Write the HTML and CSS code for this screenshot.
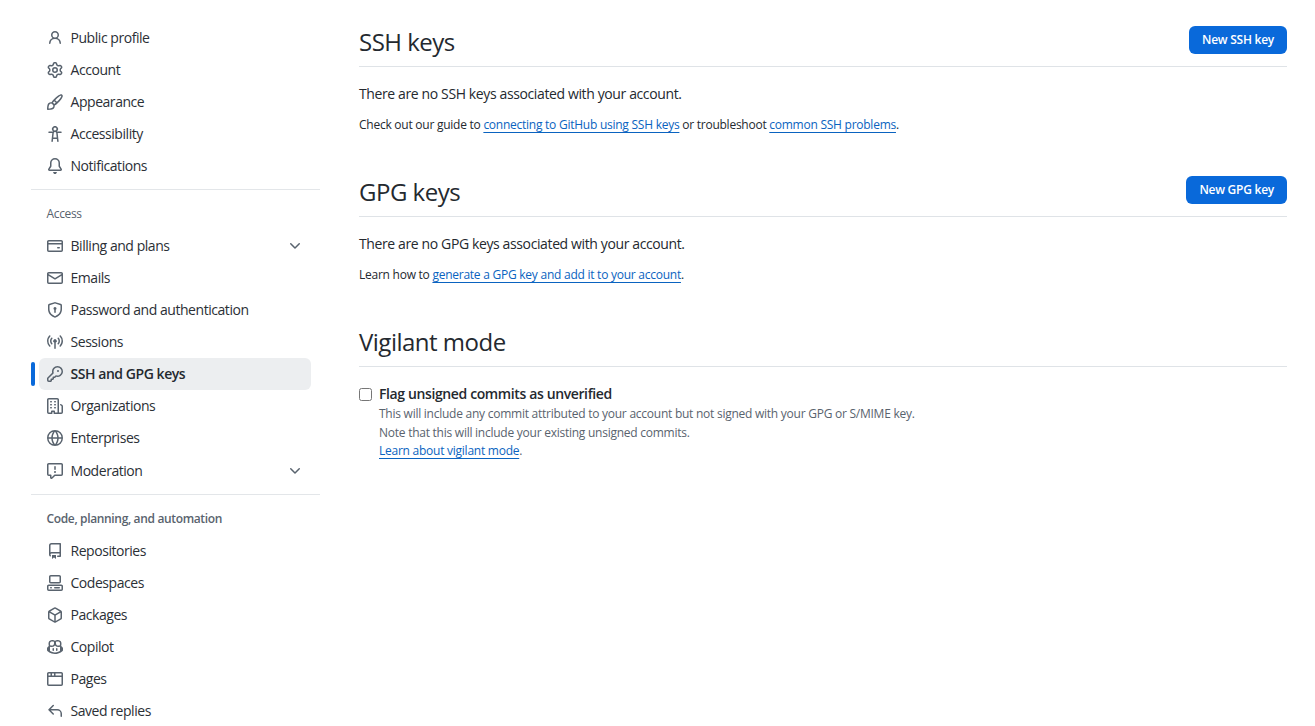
FILE: index.html
```html
<!DOCTYPE html>
<html lang="en">
<head>
    <meta charset="UTF-8">
    <meta name="viewport" content="width=device-width, initial-scale=1.0">
    <title>SSH and GPG keys</title>
    <link rel="stylesheet" href="styles.css">
</head>
<body>
<div class="layout">

    <!-- Settings navigation -->
    <nav class="sidebar">
        <a class="nav-item"><svg class="icon" viewBox="0 0 16 16"><path d="M10.561 8.073a6.005 6.005 0 0 1 3.432 5.142.75.75 0 1 1-1.498.07 4.5 4.5 0 0 0-8.99 0 .75.75 0 1 1-1.498-.07 6.004 6.004 0 0 1 3.431-5.142 3.999 3.999 0 1 1 5.123 0ZM10.5 5a2.5 2.5 0 1 0-5 0 2.5 2.5 0 0 0 5 0Z"/></svg>Public profile</a>
        <a class="nav-item"><svg class="icon" viewBox="0 0 16 16"><path d="M8 0a8.2 8.2 0 0 1 .701.031C9.444.095 9.99.645 10.16 1.29l.288 1.107c.018.066.079.158.212.224.231.114.454.243.668.386.123.082.233.09.299.071l1.103-.303c.644-.176 1.392.021 1.82.63.27.385.506.792.704 1.218.315.675.111 1.422-.364 1.891l-.814.806c-.049.048-.098.147-.088.294.016.257.016.515 0 .772-.01.147.038.246.088.294l.814.806c.475.469.679 1.216.364 1.891a7.977 7.977 0 0 1-.704 1.217c-.428.61-1.176.807-1.82.63l-1.102-.302c-.067-.019-.177-.011-.3.071a5.909 5.909 0 0 1-.668.386c-.133.066-.194.158-.211.224l-.29 1.106c-.168.646-.715 1.196-1.458 1.26a8.006 8.006 0 0 1-1.402 0c-.743-.064-1.289-.614-1.458-1.26l-.289-1.106c-.018-.066-.079-.158-.212-.224a5.738 5.738 0 0 1-.668-.386c-.123-.082-.233-.09-.299-.071l-1.103.303c-.644.176-1.392-.021-1.82-.63a8.12 8.12 0 0 1-.704-1.218c-.315-.675-.111-1.422.363-1.891l.815-.806c.05-.048.098-.147.088-.294a6.214 6.214 0 0 1 0-.772c.01-.147-.038-.246-.088-.294l-.815-.806C.635 6.045.431 5.298.746 4.623a7.92 7.92 0 0 1 .704-1.217c.428-.61 1.176-.807 1.82-.63l1.102.302c.067.019.177.011.3-.071.214-.143.437-.272.668-.386.133-.066.194-.158.211-.224l.29-1.106C6.009.645 6.556.095 7.299.03 7.53.01 7.764 0 8 0Zm-.571 1.525c-.036.003-.108.036-.137.146l-.289 1.105c-.147.561-.549.967-.998 1.189-.173.086-.34.183-.5.29-.417.278-.97.423-1.529.27l-1.103-.303c-.109-.03-.175.016-.195.045-.22.312-.412.644-.573.99-.014.031-.021.11.059.19l.815.806c.411.406.562.957.53 1.456a4.709 4.709 0 0 0 0 .582c.032.499-.119 1.05-.53 1.456l-.815.806c-.081.08-.073.159-.059.19.162.346.353.677.573.989.02.03.085.076.195.046l1.102-.303c.56-.153 1.113-.008 1.53.27.161.107.328.204.501.29.447.222.85.629.997 1.189l.289 1.105c.029.109.101.143.137.146a6.6 6.6 0 0 0 1.142 0c.036-.003.108-.036.137-.146l.289-1.105c.147-.561.549-.967.998-1.189.173-.086.34-.183.5-.29.417-.278.97-.423 1.529-.27l1.103.303c.109.029.175-.016.195-.045.22-.313.411-.644.573-.99.014-.031.021-.11-.059-.19l-.815-.806c-.411-.406-.562-.957-.53-1.456a4.709 4.709 0 0 0 0-.582c-.032-.499.119-1.05.53-1.456l.815-.806c.081-.08.073-.159.059-.19a6.464 6.464 0 0 0-.573-.989c-.02-.03-.085-.076-.195-.046l-1.102.303c-.56.153-1.113.008-1.53-.27a4.44 4.44 0 0 0-.501-.29c-.447-.222-.85-.629-.997-1.189l-.289-1.105c-.029-.11-.101-.143-.137-.146a6.6 6.6 0 0 0-1.142 0ZM11 8a3 3 0 1 1-6 0 3 3 0 0 1 6 0ZM9.5 8a1.5 1.5 0 1 0-3.001.001A1.5 1.5 0 0 0 9.5 8Z"/></svg>Account</a>
        <a class="nav-item"><svg class="icon" viewBox="0 0 16 16"><path d="M11.134 1.535c.7-.509 1.416-.942 2.076-1.155.649-.21 1.463-.267 2.069.34.603.601.568 1.411.368 2.07-.202.668-.624 1.39-1.125 2.096-1.011 1.424-2.496 2.987-3.775 4.249-1.098 1.084-2.132 1.839-3.04 2.3a3.744 3.744 0 0 1-1.055 3.217c-.431.431-1.065.691-1.657.861-.614.177-1.294.287-1.914.357A21.151 21.151 0 0 1 .797 16H.743l.007-.75H.749L.742 16a.75.75 0 0 1-.743-.742l.743-.008-.742.007v-.054a21.25 21.25 0 0 1 .13-2.284c.067-.647.187-1.287.358-1.914.17-.591.43-1.226.86-1.657a3.746 3.746 0 0 1 3.227-1.054c.466-.893 1.225-1.907 2.314-2.982 1.271-1.255 2.833-2.75 4.245-3.777ZM1.62 13.089c-.051.464-.086.929-.104 1.395.466-.018.932-.053 1.396-.104a10.511 10.511 0 0 0 1.668-.309c.526-.151.856-.325 1.011-.48a2.25 2.25 0 1 0-3.182-3.182c-.155.155-.329.485-.48 1.01a10.515 10.515 0 0 0-.309 1.67Zm10.396-10.34c-1.224.89-2.605 2.189-3.822 3.384l1.718 1.718c1.21-1.205 2.51-2.597 3.387-3.833.47-.662.78-1.227.912-1.662.134-.444.032-.551.009-.575h-.001V1.78c-.014-.014-.113-.113-.548.027-.432.14-.995.462-1.655.942Zm-4.832 7.266-.001.001a9.859 9.859 0 0 0 1.63-1.142L7.155 7.216a9.7 9.7 0 0 0-1.161 1.607c.482.302.889.71 1.19 1.192Z"/></svg>Appearance</a>
        <a class="nav-item"><svg class="icon" viewBox="0 0 16 16"><path d="M9.923 5.302c.063.063.122.129.178.198H14A.75.75 0 0 1 14 7h-3.3l.578 5.163.362 2.997a.75.75 0 0 1-1.49.18L9.868 13H6.132l-.282 2.34a.75.75 0 0 1-1.49-.18l.362-2.997L5.3 7H2a.75.75 0 0 1 0-1.5h3.9a2.54 2.54 0 0 1 .176-.198 3 3 0 1 1 3.847 0ZM9.2 7.073h-.001a1.206 1.206 0 0 0-2.398 0L6.305 11.5h3.39ZM9.5 3a1.5 1.5 0 1 0-3.001.001A1.5 1.5 0 0 0 9.5 3Z"/></svg>Accessibility</a>
        <a class="nav-item"><svg class="icon" viewBox="0 0 16 16"><path d="M8 16c.9 0 1.7-.6 1.9-1.5.1-.3-.1-.5-.4-.5h-3c-.3 0-.5.2-.4.5.2.9 1 1.5 1.9 1.5ZM3 5a5 5 0 0 1 10 0v2.947c0 .05.015.098.042.139l1.703 2.555A1.519 1.519 0 0 1 13.482 13H2.518a1.516 1.516 0 0 1-1.263-2.36l1.703-2.554A.255.255 0 0 0 3 7.947Zm5-3.5A3.5 3.5 0 0 0 4.5 5v2.947c0 .346-.102.683-.294.97l-1.703 2.556a.017.017 0 0 0-.003.01l.001.006c0 .002.002.004.004.006l.006.004.007.001h10.964l.007-.001.006-.004.004-.006.001-.007a.017.017 0 0 0-.003-.01l-1.703-2.554a1.745 1.745 0 0 1-.294-.97V5A3.5 3.5 0 0 0 8 1.5Z"/></svg>Notifications</a>

        <div class="nav-divider"></div>
        <div class="nav-heading">Access</div>

        <a class="nav-item"><svg class="icon" viewBox="0 0 16 16"><path d="M10.75 9a.75.75 0 0 0 0 1.5h1.5a.75.75 0 0 0 0-1.5h-1.5Z"/><path d="M0 3.75C0 2.784.784 2 1.75 2h12.5c.966 0 1.75.784 1.75 1.75v8.5A1.75 1.75 0 0 1 14.25 14H1.75A1.75 1.75 0 0 1 0 12.25ZM14.5 6.5h-13v5.75c0 .138.112.25.25.25h12.5a.25.25 0 0 0 .25-.25Zm0-2.75a.25.25 0 0 0-.25-.25H1.75a.25.25 0 0 0-.25.25V5h13Z"/></svg>Billing and plans<svg class="chevron" viewBox="0 0 16 16"><path d="M12.78 5.22a.749.749 0 0 1 0 1.06l-4.25 4.25a.749.749 0 0 1-1.06 0L3.22 6.28a.749.749 0 1 1 1.06-1.06L8 8.939l3.72-3.719a.749.749 0 0 1 1.06 0Z"/></svg></a>
        <a class="nav-item"><svg class="icon" viewBox="0 0 16 16"><path d="M1.75 2h12.5c.966 0 1.75.784 1.75 1.75v8.5A1.75 1.75 0 0 1 14.25 14H1.75A1.75 1.75 0 0 1 0 12.25v-8.5C0 2.784.784 2 1.75 2ZM1.5 12.251c0 .138.112.25.25.25h12.5a.25.25 0 0 0 .25-.25V5.809L8.38 9.397a.75.75 0 0 1-.76 0L1.5 5.809v6.442Zm13-8.181v-.32a.25.25 0 0 0-.25-.25H1.75a.25.25 0 0 0-.25.25v.32L8 7.88Z"/></svg>Emails</a>
        <a class="nav-item"><svg class="icon" viewBox="0 0 16 16"><path d="M8.533.133a1.75 1.75 0 0 0-1.066 0l-5.25 1.68A1.75 1.75 0 0 0 1 3.48V7c0 1.566.32 3.182 1.303 4.682.983 1.498 2.585 2.813 5.032 3.855a1.7 1.7 0 0 0 1.33 0c2.447-1.042 4.049-2.357 5.032-3.855C14.68 10.182 15 8.566 15 7V3.48a1.75 1.75 0 0 0-1.217-1.667Zm-.61 1.429.001.001a.25.25 0 0 1 .153 0l5.25 1.68a.25.25 0 0 1 .174.237V7c0 1.36-.275 2.666-1.057 3.859-.784 1.194-2.121 2.342-4.366 3.298a.196.196 0 0 1-.154 0c-2.245-.957-3.582-2.103-4.366-3.297C2.775 9.667 2.5 8.358 2.5 7V3.48a.25.25 0 0 1 .174-.238l5.25-1.68ZM9.5 6.5a1.5 1.5 0 0 1-.75 1.3v2.45a.75.75 0 0 1-1.5 0V7.8A1.5 1.5 0 1 1 9.5 6.5Z"/></svg>Password and authentication</a>
        <a class="nav-item"><svg class="icon" viewBox="0 0 16 16"><path d="M8.75 8.582v5.668a.75.75 0 0 1-1.5 0V8.582a1.75 1.75 0 1 1 1.5 0Zm3.983-7.125a.75.75 0 0 1 1.06.026A7.976 7.976 0 0 1 16 7c0 2.139-.84 4.083-2.207 5.517a.75.75 0 1 1-1.086-1.034A6.474 6.474 0 0 0 14.5 7a6.474 6.474 0 0 0-1.793-4.483.75.75 0 0 1 .026-1.06Zm-9.466 0a.75.75 0 0 1 .026 1.06A6.474 6.474 0 0 0 1.5 7c0 1.74.684 3.32 1.793 4.483a.75.75 0 1 1-1.086 1.034A7.976 7.976 0 0 1 0 7c0-2.139.84-4.083 2.207-5.517a.75.75 0 0 1 1.06-.026Zm8.556 2.321A4.988 4.988 0 0 1 13 7a4.988 4.988 0 0 1-1.177 3.222.75.75 0 1 1-1.146-.967A3.487 3.487 0 0 0 11.5 7c0-.86-.309-1.645-.823-2.255a.75.75 0 0 1 1.146-.967Zm-6.492.958A3.48 3.48 0 0 0 4.5 7a3.48 3.48 0 0 0 .823 2.255.75.75 0 0 1-1.146.967A4.981 4.981 0 0 1 3 7a4.982 4.982 0 0 1 1.188-3.236.75.75 0 1 1 1.143.97Z"/></svg>Sessions</a>
        <a class="nav-item active"><svg class="icon" viewBox="0 0 16 16"><path d="M10.5 0a5.499 5.499 0 1 1-1.288 10.848l-.932.932a.749.749 0 0 1-.53.22H7v.75a.749.749 0 0 1-.22.53l-.5.5a.749.749 0 0 1-.53.22H5v.75a.749.749 0 0 1-.22.53l-.5.5a.749.749 0 0 1-.53.22h-2A1.75 1.75 0 0 1 0 14.25v-2c0-.199.079-.389.22-.53l4.932-4.932A5.5 5.5 0 0 1 10.5 0Zm-4 5.5c-.001.431.069.86.205 1.269a.75.75 0 0 1-.181.768L1.5 12.56v1.69c0 .138.112.25.25.25h1.69l.06-.06v-1.19a.75.75 0 0 1 .75-.75h1.19l.06-.06v-1.19a.75.75 0 0 1 .75-.75h1.19l1.023-1.025a.75.75 0 0 1 .768-.18A4 4 0 1 0 6.5 5.5ZM11 6a1 1 0 1 1 0-2 1 1 0 0 1 0 2Z"/></svg>SSH and GPG keys</a>
        <a class="nav-item"><svg class="icon" viewBox="0 0 16 16"><path d="M1.75 16A1.75 1.75 0 0 1 0 14.25V1.75C0 .784.784 0 1.75 0h8.5C11.216 0 12 .784 12 1.75v12.5c0 .085-.006.168-.018.25h2.268a.25.25 0 0 0 .25-.25V8.285a.25.25 0 0 0-.111-.208l-1.055-.703a.749.749 0 1 1 .832-1.248l1.055.703c.487.325.779.871.779 1.456v5.965A1.75 1.75 0 0 1 14.25 16h-3.5a.766.766 0 0 1-.197-.026c-.099.017-.2.026-.303.026h-3a.75.75 0 0 1-.75-.75V14h-1v1.25a.75.75 0 0 1-.75.75Zm-.25-1.75c0 .138.112.25.25.25H4v-1.25a.75.75 0 0 1 .75-.75h2.5a.75.75 0 0 1 .75.75v1.25h2.25a.25.25 0 0 0 .25-.25V1.75a.25.25 0 0 0-.25-.25h-8.5a.25.25 0 0 0-.25.25ZM3.75 6h.5a.75.75 0 0 1 0 1.5h-.5a.75.75 0 0 1 0-1.5ZM3 3.75A.75.75 0 0 1 3.75 3h.5a.75.75 0 0 1 0 1.5h-.5A.75.75 0 0 1 3 3.75Zm4 3A.75.75 0 0 1 7.75 6h.5a.75.75 0 0 1 0 1.5h-.5A.75.75 0 0 1 7 6.75ZM7.75 3h.5a.75.75 0 0 1 0 1.5h-.5a.75.75 0 0 1 0-1.5ZM3 9.75A.75.75 0 0 1 3.75 9h.5a.75.75 0 0 1 0 1.5h-.5A.75.75 0 0 1 3 9.75ZM7.75 9h.5a.75.75 0 0 1 0 1.5h-.5a.75.75 0 0 1 0-1.5Z"/></svg>Organizations</a>
        <a class="nav-item"><svg class="icon" viewBox="0 0 16 16"><path d="M8 0a8 8 0 1 1 0 16A8 8 0 0 1 8 0ZM5.78 8.75a9.64 9.64 0 0 0 1.363 4.177c.255.426.542.832.857 1.215.245-.296.551-.705.857-1.215A9.64 9.64 0 0 0 10.22 8.75Zm4.44-1.5a9.64 9.64 0 0 0-1.363-4.177c-.307-.51-.612-.919-.857-1.215a9.927 9.927 0 0 0-.857 1.215A9.64 9.64 0 0 0 5.78 7.25Zm-5.944 1.5H1.543a6.507 6.507 0 0 0 4.666 5.5c-.123-.181-.24-.365-.352-.552-.715-1.192-1.437-2.874-1.581-4.948Zm-2.733-1.5h2.733c.144-2.074.866-3.756 1.58-4.948.12-.197.237-.381.353-.552a6.507 6.507 0 0 0-4.666 5.5Zm10.181 1.5c-.144 2.074-.866 3.756-1.58 4.948-.12.197-.237.381-.353.552a6.507 6.507 0 0 0 4.666-5.5Zm2.733-1.5a6.507 6.507 0 0 0-4.666-5.5c.123.181.24.365.353.552.714 1.192 1.436 2.874 1.58 4.948Z"/></svg>Enterprises</a>
        <a class="nav-item nav-item-last"><svg class="icon" viewBox="0 0 16 16"><path d="M0 1.75C0 .784.784 0 1.75 0h12.5C15.216 0 16 .784 16 1.75v9.5A1.75 1.75 0 0 1 14.25 13H8.06l-2.573 2.573A1.458 1.458 0 0 1 3 14.543V13H1.75A1.75 1.75 0 0 1 0 11.25Zm1.75-.25a.25.25 0 0 0-.25.25v9.5c0 .138.112.25.25.25h2a.75.75 0 0 1 .75.75v2.19l2.72-2.72a.749.749 0 0 1 .53-.22h6.5a.25.25 0 0 0 .25-.25v-9.5a.25.25 0 0 0-.25-.25Zm7 2.25v2.5a.75.75 0 0 1-1.5 0v-2.5a.75.75 0 0 1 1.5 0ZM9 9a1 1 0 1 1-2 0 1 1 0 0 1 2 0Z"/></svg>Moderation<svg class="chevron" viewBox="0 0 16 16"><path d="M12.78 5.22a.749.749 0 0 1 0 1.06l-4.25 4.25a.749.749 0 0 1-1.06 0L3.22 6.28a.749.749 0 1 1 1.06-1.06L8 8.939l3.72-3.719a.749.749 0 0 1 1.06 0Z"/></svg></a>

        <div class="nav-divider"></div>
        <div class="nav-heading nav-heading-bold">Code, planning, and automation</div>

        <a class="nav-item"><svg class="icon" viewBox="0 0 16 16"><path d="M2 2.5A2.5 2.5 0 0 1 4.5 0h8.75a.75.75 0 0 1 .75.75v12.5a.75.75 0 0 1-.75.75h-2.5a.75.75 0 0 1 0-1.5h1.75v-2h-8a1 1 0 0 0-.714 1.7.75.75 0 1 1-1.072 1.05A2.495 2.495 0 0 1 2 11.5Zm10.5-1h-8a1 1 0 0 0-1 1v6.708A2.486 2.486 0 0 1 4.5 9h8ZM5 12.25a.25.25 0 0 1 .25-.25h3.5a.25.25 0 0 1 .25.25v3.25a.25.25 0 0 1-.4.2l-1.45-1.087a.249.249 0 0 0-.3 0L5.4 15.7a.25.25 0 0 1-.4-.2Z"/></svg>Repositories</a>
        <a class="nav-item"><svg class="icon" viewBox="0 0 16 16"><path d="M0 11.25c0-.966.784-1.75 1.75-1.75h12.5c.966 0 1.75.784 1.75 1.75v3A1.75 1.75 0 0 1 14.25 16H1.75A1.75 1.75 0 0 1 0 14.25Zm2-9.5C2 .784 2.784 0 3.75 0h8.5C13.216 0 14 .784 14 1.75v5a1.75 1.75 0 0 1-1.75 1.75h-8.5A1.75 1.75 0 0 1 2 6.75Zm1.75-.25a.25.25 0 0 0-.25.25v5c0 .138.112.25.25.25h8.5a.25.25 0 0 0 .25-.25v-5a.25.25 0 0 0-.25-.25Zm-2 9.5a.25.25 0 0 0-.25.25v3c0 .138.112.25.25.25h12.5a.25.25 0 0 0 .25-.25v-3a.25.25 0 0 0-.25-.25Z"/><path d="M7 12.75a.75.75 0 0 1 .75-.75h4.5a.75.75 0 0 1 0 1.5h-4.5a.75.75 0 0 1-.75-.75Zm-4 0a.75.75 0 0 1 .75-.75h.5a.75.75 0 0 1 0 1.5h-.5a.75.75 0 0 1-.75-.75Z"/></svg>Codespaces</a>
        <a class="nav-item"><svg class="icon" viewBox="0 0 16 16"><path d="m8.878.392 5.25 3.045c.54.314.872.89.872 1.514v6.098a1.75 1.75 0 0 1-.872 1.514l-5.25 3.045a1.75 1.75 0 0 1-1.756 0l-5.25-3.045A1.75 1.75 0 0 1 1 11.049V4.951c0-.624.332-1.201.872-1.514L7.122.392a1.75 1.75 0 0 1 1.756 0ZM7.875 1.69l-4.63 2.685L8 7.133l4.755-2.758-4.63-2.685a.248.248 0 0 0-.25 0ZM2.5 5.677v5.372c0 .09.047.171.125.216l4.625 2.683V8.432Zm6.25 8.271 4.625-2.683a.25.25 0 0 0 .125-.216V5.677L8.75 8.432Z"/></svg>Packages</a>
        <a class="nav-item"><svg class="icon" viewBox="0 0 16 16"><path d="M7.998 15.035c-4.562 0-7.873-2.914-7.998-3.749V9.338c.085-.628.677-1.686 1.588-2.065.013-.07.024-.143.036-.218.029-.183.06-.384.126-.612-.201-.508-.254-1.084-.254-1.656 0-.87.128-1.769.693-2.484.579-.733 1.494-1.124 2.724-1.261 1.206-.134 2.262.034 2.944.765.05.053.096.108.139.165.044-.057.094-.112.143-.165.682-.731 1.738-.899 2.944-.765 1.23.137 2.145.528 2.724 1.261.566.715.693 1.614.693 2.484 0 .572-.053 1.148-.254 1.656.066.228.098.429.126.612.012.076.024.148.037.218.924.385 1.522 1.471 1.591 2.095v1.872c0 .766-3.351 3.795-8.002 3.795Zm0-1.485c2.28 0 4.584-1.11 5.002-1.433V7.862l-.023-.116c-.49.21-1.075.291-1.727.291-1.146 0-2.059-.327-2.71-.991A3.222 3.222 0 0 1 8 6.303a3.24 3.24 0 0 1-.544.743c-.65.664-1.563.991-2.71.991-.652 0-1.236-.081-1.727-.291l-.023.116v4.255c.419.323 2.722 1.433 5.002 1.433ZM6.762 2.83c-.193-.206-.637-.413-1.682-.297-1.019.113-1.479.404-1.713.7-.247.312-.369.789-.369 1.554 0 .793.129 1.171.308 1.371.162.181.519.379 1.442.379.853 0 1.339-.235 1.638-.54.315-.322.527-.827.617-1.553.117-.935-.037-1.395-.241-1.614Zm4.155-.297c-1.044-.116-1.488.091-1.681.297-.204.219-.359.679-.242 1.614.091.726.303 1.231.618 1.553.299.305.784.54 1.638.54.922 0 1.28-.198 1.442-.379.179-.2.308-.578.308-1.371 0-.765-.123-1.242-.37-1.554-.233-.296-.693-.587-1.713-.7Z"/><path d="M6.25 9.037a.75.75 0 0 1 .75.75v1.501a.75.75 0 0 1-1.5 0V9.787a.75.75 0 0 1 .75-.75Zm4.25.75v1.501a.75.75 0 0 1-1.5 0V9.787a.75.75 0 0 1 1.5 0Z"/></svg>Copilot</a>
        <a class="nav-item"><svg class="icon" viewBox="0 0 16 16"><path d="M0 2.75C0 1.784.784 1 1.75 1h12.5c.966 0 1.75.784 1.75 1.75v10.5A1.75 1.75 0 0 1 14.25 15H1.75A1.75 1.75 0 0 1 0 13.25ZM14.5 6h-13v7.25c0 .138.112.25.25.25h12.5a.25.25 0 0 0 .25-.25Zm-6-3.5v2h6V2.75a.25.25 0 0 0-.25-.25ZM5 2.5v2h2v-2Zm-3.25 0a.25.25 0 0 0-.25.25V4.5h2v-2Z"/></svg>Pages</a>
        <a class="nav-item"><svg class="icon" viewBox="0 0 16 16"><path d="M6.78 1.97a.75.75 0 0 1 0 1.06L3.81 6h6.44A4.75 4.75 0 0 1 15 10.75v2.5a.75.75 0 0 1-1.5 0v-2.5a3.25 3.25 0 0 0-3.25-3.25H3.81l2.97 2.97a.749.749 0 0 1-.326 1.275.749.749 0 0 1-.734-.215L1.47 7.28a.75.75 0 0 1 0-1.06l4.25-4.25a.75.75 0 0 1 1.06 0Z"/></svg>Saved replies</a>
    </nav>

    <!-- Main content -->
    <main class="content">
        <section class="block">
            <div class="block-head">
                <h2>SSH keys</h2>
                <a class="button">New SSH key</a>
            </div>
            <p class="lead">There are no SSH keys associated with your account.</p>
            <p class="small">Check out our guide to <a class="link">connecting to GitHub using SSH keys</a> or troubleshoot <a class="link">common SSH problems</a>.</p>
        </section>

        <section class="block">
            <div class="block-head">
                <h2>GPG keys</h2>
                <a class="button">New GPG key</a>
            </div>
            <p class="lead">There are no GPG keys associated with your account.</p>
            <p class="small">Learn how to <a class="link">generate a GPG key and add it to your account</a>.</p>
        </section>

        <section class="block">
            <div class="block-head plain">
                <h2>Vigilant mode</h2>
            </div>
            <div class="check-row">
                <input type="checkbox" class="check">
                <div>
                    <label class="check-label">Flag unsigned commits as unverified</label>
                    <p class="note note-first">This will include any commit attributed to your account but not signed with your GPG or S/MIME key.</p>
                    <p class="note">Note that this will include your existing unsigned commits.</p>
                    <p class="note"><a class="link">Learn about vigilant mode</a>.</p>
                </div>
            </div>
        </section>
    </main>
</div>
</body>
</html>
```

FILE: styles.css
```css
html, body {
    height: 100%;
}
body {
    margin: 0;
    overflow: hidden;
    background-color: #ffffff;
    color: #24292f;
    font-family: "Open Sans", "Noto Sans", sans-serif;
    font-size: 14px;
    letter-spacing: -0.38px;
}
.layout {
    display: flex;
    padding: 22px 28px 0 31px;
    height: 100%;
    box-sizing: border-box;
}
.sidebar {
    width: 289px;
    flex-shrink: 0;
}
.nav-item {
    position: relative;
    display: flex;
    align-items: center;
    height: 30px;
    padding: 0 0 2px 8px;
    margin: 0 9px 0 8px;
    border-radius: 6px;
    color: #2b3036;
    letter-spacing: -0.45px;
}
.nav-item-last {
    margin-top: 1px;
}
.nav-item.active {
    background-color: #eceef0;
    font-weight: 600;
    color: #24292f;
}
.nav-item.active::before {
    content: "";
    position: absolute;
    left: -8px;
    top: 4px;
    width: 4px;
    height: 24px;
    border-radius: 6px;
    background-color: #0969da;
}
.icon {
    width: 16px;
    height: 16px;
    margin: 2px 7.5px 0 0;
    fill: #59636e;
    flex-shrink: 0;
}
.chevron {
    width: 16px;
    height: 16px;
    margin: 2px 8px 0 auto;
    fill: #59636e;
}
.nav-divider {
    height: 1px;
    margin: 7px 0 8px;
    background-color: #e3e6e9;
}
.nav-heading {
    height: 32px;
    padding-left: 15.5px;
    line-height: 32px;
    font-size: 12px;
    color: #59636e;
    letter-spacing: -0.35px;
}
.nav-heading-bold {
    font-weight: 600;
}

.content {
    flex: 1;
    margin-left: 39px;
    margin-top: 4px;
}
.block {
    height: 150px;
}
.block-head {
    display: flex;
    align-items: center;
    justify-content: space-between;
    height: 40px;
    border-bottom: 1px solid #dfe3e7;
}
.block-head h2 {
    margin: 0 0 10px;
    font-size: 24px;
    font-weight: 400;
    letter-spacing: -0.5px;
}
.button {
    display: block;
    height: 28px;
    padding: 0 13px;
    margin-bottom: 12px;
    line-height: 28px;
    border-radius: 6px;
    background-color: #0969da;
    color: #ffffff;
    font-size: 12px;
    font-weight: 600;
    letter-spacing: -0.25px;
}
.lead {
    margin: 17px 0 0;
    line-height: 20px;
}
.small {
    margin: 12px 0 0;
    font-size: 12px;
    line-height: 18px;
    letter-spacing: -0.25px;
}
.link {
    color: #0a63c0;
    text-decoration: underline;
    text-decoration-thickness: 1px;
    text-underline-offset: 3px;
}
.check-row {
    display: flex;
    margin-top: 17px;
}
.check {
    width: 13px;
    height: 13px;
    margin: 4px 7px 0 0;
}
.check-label {
    display: block;
    line-height: 20px;
    font-weight: 600;
}
.note {
    margin: 0;
    font-size: 12px;
    line-height: 18.5px;
    color: #59636e;
    letter-spacing: -0.25px;
}
.note-first {
    margin-top: 1px;
}
```
